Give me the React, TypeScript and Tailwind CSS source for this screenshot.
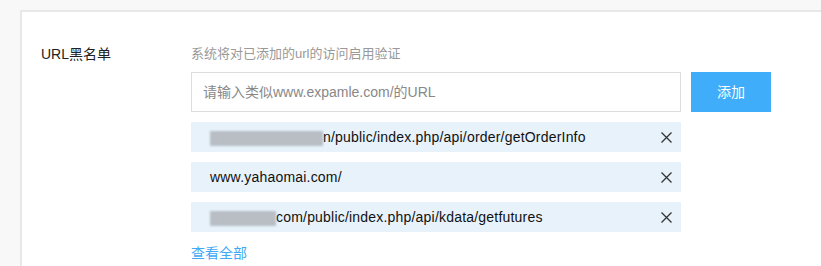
import React from 'react'

type Item = { hidden?: number; text: string }

const items: Item[] = [
  { hidden: 113, text: 'n/public/index.php/api/order/getOrderInfo' },
  { text: 'www.yahaomai.com/' },
  { hidden: 66, text: 'com/public/index.php/api/kdata/getfutures' },
]

function CloseIcon() {
  return (
    <svg width="11" height="11" viewBox="0 0 11 11" className="text-[#333]">
      <path d="M0.5 0.5 L10.5 10.5 M10.5 0.5 L0.5 10.5" stroke="currentColor" strokeWidth="1.3" />
    </svg>
  )
}

export default function App() {
  return (
    <div className="min-h-[266px] bg-[#f8f8f8] pt-[10px] pl-[20px] font-['Liberation_Sans','Noto_Sans_CJK_SC',sans-serif]">
      <div className="h-[256px] bg-white border-t-2 border-l-2 border-[#e8e8e8] pt-[32px] pl-[19px]">
        <div className="flex">
          {/* label */}
          <div className="w-[150px] text-[14px] text-[#222] leading-[20px]">URL黑名单</div>

          {/* content */}
          <div className="flex flex-col">
            <div className="text-[13px] text-[#999] leading-[20px]">系统将对已添加的url的访问启用验证</div>

            <div className="mt-[8px] flex gap-[10px]">
              <div className="w-[490px] h-[40px] border border-[#dcdcdc] flex items-center px-[11px] text-[14px] text-[#888]">
                请输入类似www.expamle.com/的URL
              </div>
              <button className="w-[80px] h-[40px] bg-[#3fadf9] text-white text-[14px]">添加</button>
            </div>

            <div className="mt-[10px] flex flex-col gap-[10px] w-[490px]">
              {items.map((it, i) => (
                <div key={i} className="h-[30px] bg-[#e8f2fb] flex items-center pl-[19px] pr-[9px]">
                  {it.hidden ? (
                    <div
                      className="h-[15px] bg-[#b9bec5] blur-[1px] mt-[2px]"
                      style={{ width: it.hidden }}
                    />
                  ) : null}
                  <span className="flex-1 text-[14px] tracking-[0.2px] text-[#111] leading-[30px]">{it.text}</span>
                  <CloseIcon />
                </div>
              ))}
            </div>

            <a className="mt-[12px] text-[14px] text-[#3fa9f5] leading-[18px] cursor-pointer">查看全部</a>
          </div>
        </div>
      </div>
    </div>
  )
}
